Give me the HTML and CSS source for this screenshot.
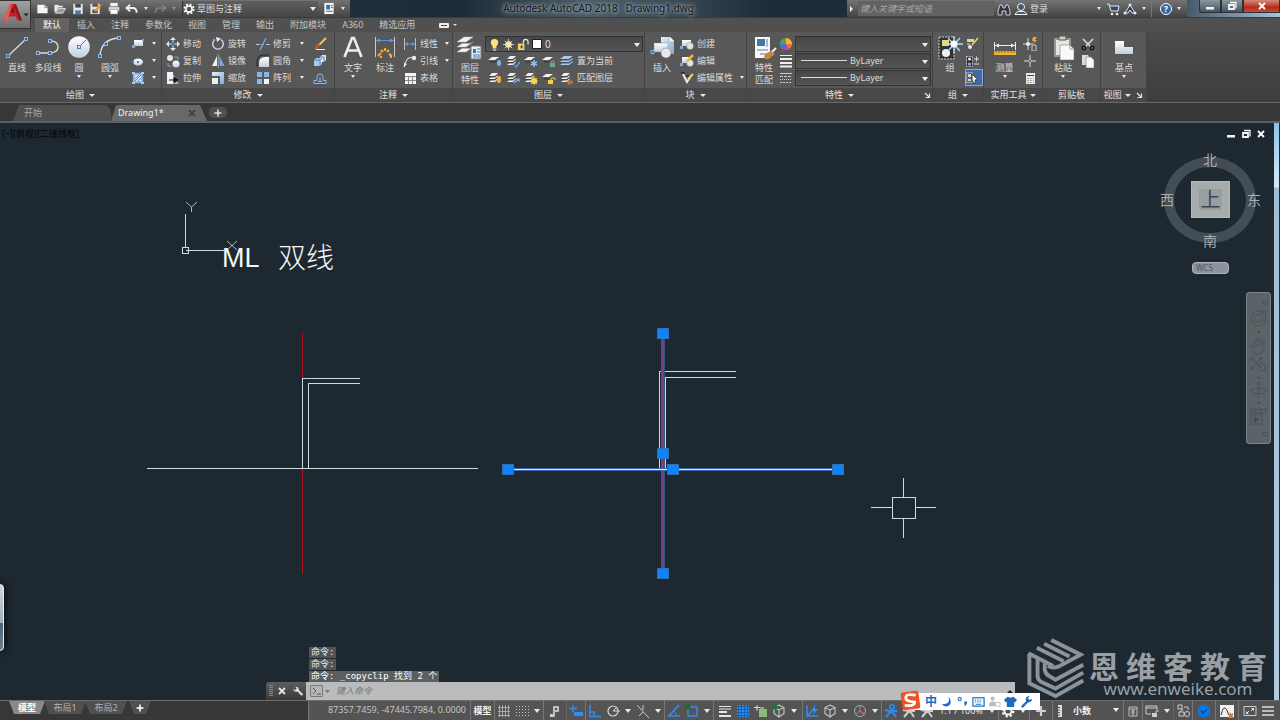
FILE: index.html
```html
<!DOCTYPE html>
<html lang="zh-CN">
<head>
<meta charset="utf-8">
<title>Autodesk AutoCAD 2018 - Drawing1.dwg</title>
<link rel="stylesheet" href="styles.css">
</head>
<body>
<svg class="sprite" aria-hidden="true">
<defs>
<linearGradient id="gw" x1="0" y1="0" x2="0" y2="1"><stop offset="0" stop-color="#ffffff"/><stop offset="1" stop-color="#c3cede"/></linearGradient>
<linearGradient id="gb" x1="0" y1="0" x2="1" y2="1"><stop offset="0" stop-color="#e4effb"/><stop offset="1" stop-color="#7fa9d8"/></linearGradient>
<pattern id="dots" width="3" height="3" patternUnits="userSpaceOnUse"><rect width="2" height="2" fill="#2f8cf0"/></pattern>
</defs>
<!-- large icons -->
<symbol id="line" viewBox="0 0 26 26"><path d="M4 21L22 4" stroke="#dcdcdc" stroke-width="1.3"/><g fill="#345f9c" stroke="#8db8ee"><rect x="2.500" y="19.500" width="3" height="3"/><rect x="20.500" y="2.500" width="3" height="3"/></g></symbol>
<symbol id="pline" viewBox="0 0 26 26"><path d="M4 18H16Q23 17 23 12Q23 6 15 6" fill="none" stroke="#dcdcdc" stroke-width="1.3"/><g fill="#345f9c" stroke="#8db8ee"><rect x="1.500" y="16.500" width="3" height="3"/><rect x="13.500" y="16.500" width="3" height="3"/><rect x="13.500" y="4.500" width="3" height="3"/></g></symbol>
<symbol id="circle" viewBox="0 0 26 26"><circle cx="13" cy="12" r="10.800" fill="url(#gw)"/><path d="M13 12L20 5" stroke="#4b7dbd"/><rect x="11.500" y="10.500" width="3" height="3" fill="#dce9f8" stroke="#4b7dbd"/></symbol>
<symbol id="arc" viewBox="0 0 26 26"><path d="M3 21Q4 4 22 3" fill="none" stroke="#dcdcdc" stroke-width="1.300"/><g fill="#345f9c" stroke="#8db8ee"><rect x="1.500" y="19.500" width="3" height="3"/><rect x="7.500" y="7.500" width="3" height="3"/><rect x="20.500" y="1.500" width="3" height="3"/></g></symbol>
<symbol id="textA" viewBox="0 0 26 26"><path d="M4.500 22L12 3H14L21.500 22M7.500 15.500H18.500" fill="none" stroke="#ededed" stroke-width="2.600"/></symbol>
<symbol id="dim" viewBox="0 0 26 26"><path d="M3.500 2V22M22.500 2V22" stroke="#ccc"/><path d="M4 5.500H22" stroke="#5b9ae6"/><path d="M4 5.500l4-2v4zM22 5.500l-4-2v4z" fill="#5b9ae6"/><path d="M6 21l3-3m0-3l2 2m2-4v3m4-1l-2 2m2 2l3 2M8 22h2m8 0h2" stroke="#f0ad2f" stroke-width="2.200"/></symbol>
<symbol id="layers" viewBox="0 0 26 26"><path d="M0 7L7 2H16L9 7zM0 12L5 8.500H14L16 7 9 12zM0 17L5 13.500H14L16 12 9 17z" fill="#f4f4f4" stroke="#bbb" stroke-width=".5"/><rect x="14" y="11" width="10" height="13" fill="#e8f0fa" stroke="#777"/><path d="M16 14h3v4h-3z" fill="#3875c0"/><path d="M20 14h3m-3 3h3m-7 3h7m-7 2h7" stroke="#4d77a8"/></symbol>
<symbol id="insert" viewBox="0 0 26 26"><path d="M12 2h9l4 4v13H12z" fill="url(#gb)"/><path d="M21 2v4h4" fill="#fff"/><rect x="5" y="8" width="14" height="9" fill="url(#gw)" stroke="#888" stroke-width=".5"/><circle cx="17" cy="18" r="5" fill="#e9e9e9" stroke="#777" stroke-width=".5"/><path d="M2 15.500h3v3H2z" fill="#345f9c" stroke="#8db8ee"/></symbol>
<symbol id="match" viewBox="0 0 26 26"><rect x="4" y="2" width="15" height="21" fill="#f4f7fb"/><path d="M6 4h8v7H6z" fill="#3e79ae"/><path d="M16 4v8M6 15h11M9 19h7" stroke="#778"/><path d="M14 19l6-3 4 3-6 5q-4 1-5-1z" fill="#c7843e"/><path d="M21 17l4-4" stroke="#eee" stroke-width="2"/></symbol>
<symbol id="group" viewBox="0 0 26 26"><rect x="2" y="2" width="15" height="22" fill="#333" stroke="#ccc" stroke-dasharray="2 1"/><rect x="5" y="5" width="7" height="6" fill="#e5d877"/><circle cx="9" cy="18" r="4" fill="#f0f0f0"/><path d="M17 1v17M8 9h18M11 3l12 13M23 3L11 16" stroke="#a9dcff" stroke-width="1.400"/><circle cx="17" cy="9" r="3.500" fill="#f3fbff"/></symbol>
<symbol id="measure" viewBox="0 0 26 26"><path d="M2.500 7v8M23.500 7v8M3 10.500h20" stroke="#eee"/><path d="M3 10.500l4-2v4zM23 10.500l-4-2v4z" fill="#eee"/><rect x="2" y="16" width="22" height="4" fill="#efb52b"/><path d="M4 16v2m3-2v2m3-2v2m3-2v2m3-2v2m3-2v2m3-2v2" stroke="#8f6512"/></symbol>
<symbol id="paste" viewBox="0 0 26 26"><path d="M4 3h17v19H4z" fill="#9b9789"/><path d="M6 5h13v15H6z" fill="#e6e6e2"/><path d="M9 1h7v4H9z" fill="#ccc" stroke="#555"/><path d="M10 10h10l4 4v11H10z" fill="#fafafa" stroke="#777" stroke-width=".600"/><path d="M20 10v4h4" fill="none" stroke="#999"/></symbol>
<symbol id="base" viewBox="0 0 26 26"><path d="M4 6h9v6h9v7H4z" fill="url(#gw)"/></symbol>
<!-- small icons -->
<symbol id="rect" viewBox="0 0 14 14"><rect x="3" y="3" width="9" height="6" fill="url(#gw)"/><path d="M1 8h3v3H1zM11 2h2v2h-2z" fill="#77a9e8"/></symbol>
<symbol id="ellipse" viewBox="0 0 14 14"><ellipse cx="7" cy="8" rx="5" ry="3.500" fill="url(#gw)"/><path d="M6 7h2v2H6zM1 7h2v2H1zM6 3h2v2H6z" fill="#4f83c8"/></symbol>
<symbol id="hatch" viewBox="0 0 14 14"><rect x="2" y="2" width="10" height="10" fill="#9dbde6" stroke="#5e91d4" stroke-dasharray="2 1"/><path d="M4 4h6v6H4z" fill="#d4e5fa"/><path d="M4 8l4-4M4 10l6-6M7 10l3-3" stroke="#5e91d4"/><path d="M1 1h3v2H1zM10 1h3v2h-3zM1 11h3v2H1zM10 11h3v2h-3z" fill="#a9ccf6"/></symbol>
<symbol id="move" viewBox="0 0 14 14"><path d="M7 0l3 3H4zM7 14l3-3H4zM0 7l3-3v6zM14 7l-3-3v6z" fill="#dfe9f5"/><path d="M7 3v8M3 7h8" stroke="#9bbbe0" stroke-width="1.400"/><circle cx="7" cy="7" r="1.500" fill="#4272b0"/></symbol>
<symbol id="rotate" viewBox="0 0 14 14"><path d="M4 2.500A5.300 5.300 0 1 0 10 2.500" fill="none" stroke="#d6e1ee" stroke-width="1.300"/><path d="M5 0l5 1.500L6 5z" fill="#e8eef6"/><circle cx="3" cy="3" r="1" fill="#6da5ec"/></symbol>
<symbol id="trim" viewBox="0 0 14 14"><path d="M0 7.500h4M10 7.500h4" stroke="#aac6ea"/><path d="M10 1L4 13" stroke="#6eaef5" stroke-width="1.300"/><path d="M5 7.500h4" stroke="#75aef0" stroke-dasharray="1 1"/></symbol>
<symbol id="brush" viewBox="0 0 14 14"><path d="M13 1L6 8" stroke="#edc36d" stroke-width="2"/><path d="M7 7l-3 5H1l3-5z" fill="#c55426"/><path d="M3 12.500h9" stroke="#eee"/></symbol>
<symbol id="copy" viewBox="0 0 14 14"><circle cx="4" cy="4" r="3" fill="#e6e6e6"/><circle cx="10" cy="10" r="3.500" fill="url(#gw)"/><path d="M8 3h4v3M2 9v3h3" fill="none" stroke="#73a5e2"/></symbol>
<symbol id="mirror" viewBox="0 0 14 14"><path d="M6 2v10H1z" fill="#f1f1f1"/><path d="M8.500 2v10h5z" fill="#7da8db"/><path d="M7.200 0v14" stroke="#ddd" stroke-width=".600"/></symbol>
<symbol id="fillet" viewBox="0 0 14 14"><path d="M1 13V8Q1 1 8 1h5" fill="none" stroke="#222"/><path d="M3 13V9q0-6 6-6h4v10z" fill="url(#gw)"/></symbol>
<symbol id="explode" viewBox="0 0 14 14"><path d="M1 6l2-2h6v6l-2 2H1z" fill="#a7cbf4"/><path d="M7 3l2-2h4v5l-2 2H7z" fill="#d6e8fb"/><path d="M1 6h6v6M7 6l2-2M7 3h4v5" fill="none" stroke="#5584bd"/></symbol>
<symbol id="stretch" viewBox="0 0 14 14"><path d="M1 1h6v12H1z" fill="#f2f2f2"/><path d="M7 3l6 10H7z" fill="#83b1e8"/><path d="M3 9h5M8 6.500L12 9l-4 2.500z" fill="#111" stroke="#111"/></symbol>
<symbol id="scale" viewBox="0 0 14 14"><path d="M1 1h12v12H9V5H1z" fill="url(#gb)"/><rect x="1" y="7" width="6" height="6" fill="#eee"/></symbol>
<symbol id="array" viewBox="0 0 14 14"><path d="M1 1h5v5H1zM8 1h5v5H8zM1 8h5v5H1z" fill="#87b5ed"/><path d="M8 8h5v5H8z" fill="#f4f4f4"/></symbol>
<symbol id="offset" viewBox="0 0 14 14"><path d="M1 12.500h12v-3H10V6a3 3 0 0 0-6 0v3.500H1z" fill="#4b5a6e" stroke="#9ab4d0"/><path d="M5 10.500h4M7 6v4" stroke="#9ab4d0"/></symbol>
<symbol id="dlin" viewBox="0 0 14 14"><path d="M1.500 1v12M12.500 1v12" stroke="#bbb"/><path d="M2 7h10" stroke="#5b9ae6"/><path d="M2 7l3-2v4zM12 7L9 5v4z" fill="#5b9ae6"/></symbol>
<symbol id="leader" viewBox="0 0 14 14"><path d="M1 13Q3 5 6 4t4 0" fill="none" stroke="#ddd" stroke-width="1.200"/><path d="M1 13l0-4 3 1z" fill="#eee"/><circle cx="11" cy="4" r="2.200" fill="#eee"/></symbol>
<symbol id="table" viewBox="0 0 14 14"><path d="M2 2h11v11H2z" fill="#f4f4f4"/><path d="M2 5.500h11M2 9.500h11M5.500 5v8M9.500 5v8" stroke="#888"/></symbol>
<symbol id="lay" viewBox="0 0 14 14"><path d="M0 6l4-3h7L7 6z" fill="#f2f2f2"/><path d="M2 8h5l3-2" fill="none" stroke="#333"/></symbol>
<symbol id="lay3" viewBox="0 0 14 14"><path d="M1 5l3-3h6L7 5zM1 8l2-1.500h4L10 4v1L7 8zM1 11l2-1.500h4L10 7v1l-3 3z" fill="#f0f0f0"/><path d="M1 5.500h6l3-2M1 8.500h6l3-2" fill="none" stroke="#333" stroke-width=".600"/></symbol>
<symbol id="l1" viewBox="0 0 14 14"><use href="#lay"/><rect x="9" y="6" width="4" height="6" rx="2" fill="#7ab1ec"/></symbol>
<symbol id="l2" viewBox="0 0 14 14"><use href="#lay3"/><path d="M8 11l2 2 4-5" fill="none" stroke="#5b9ae6" stroke-width="1.500"/></symbol>
<symbol id="l3" viewBox="0 0 14 14"><use href="#lay"/><path d="M10 6v7M7 8l6 3M13 8l-6 3" stroke="#8fc2fa" stroke-width="1.500"/></symbol>
<symbol id="l4" viewBox="0 0 14 14"><use href="#lay"/><path d="M8 9h5v4H8z" fill="#68aa8c"/><path d="M9 9V7h3v2" fill="none" stroke="#68aa8c"/></symbol>
<symbol id="l5" viewBox="0 0 14 14"><path d="M0 5l4-3h9L9 5zM0 8l2-1.500h7L13 4v1L9 8zM0 11l2-1.500h7L13 7v1l-4 3z" fill="#a8c9ee"/><path d="M0 5.500h9l4-3M0 8.500h9l4-3" fill="none" stroke="#35506f" stroke-width=".600"/></symbol>
<symbol id="l6" viewBox="0 0 14 14"><use href="#lay3"/><rect x="9" y="5" width="4" height="7" rx="2" fill="#f2ad38"/></symbol>
<symbol id="l7" viewBox="0 0 14 14"><use href="#lay3"/><path d="M8 12l5-4M10 8h3v3" fill="none" stroke="#7cb2f1" stroke-width="1.200"/></symbol>
<symbol id="l8" viewBox="0 0 14 14"><use href="#lay3"/><circle cx="10" cy="10" r="3" fill="#ffe25c"/><path d="M10 5v9M5 10h9M7 7l6 6M13 7l-6 6" stroke="#f5d145"/></symbol>
<symbol id="l9" viewBox="0 0 14 14"><use href="#lay"/><path d="M6 9h5v4H6z" fill="#f0d047"/><path d="M9 9V7h4v2" fill="none" stroke="#f0d047"/></symbol>
<symbol id="l10" viewBox="0 0 14 14"><use href="#lay3"/><path d="M7 10l5-1 1 3-5 2z" fill="#bd7637"/></symbol>
<symbol id="bulb" viewBox="0 0 14 14"><path d="M7 1a4 4 0 0 1 4 4q0 2-2 4v2H5V9Q3 7 3 5a4 4 0 0 1 4-4z" fill="#ffe17b"/><path d="M5 12h4M6 13.500h2" stroke="#ddd"/></symbol>
<symbol id="sun" viewBox="0 0 14 14"><path d="M7 1v12M1 7h12M3 3l8 8M11 3L3 11" stroke="#d9ceb0"/><circle cx="7" cy="7" r="3.500" fill="#f3e7b5"/></symbol>
<symbol id="unlock" viewBox="0 0 14 14"><path d="M2 6h7v7H2z" fill="#eed472"/><path d="M8 6V4a2.300 2.300 0 0 1 5 0v3" fill="none" stroke="#eee" stroke-width="1.300"/><path d="M5 8h2v3H5z" fill="#5a4615"/></symbol>
<symbol id="bcreate" viewBox="0 0 14 14"><path d="M2 3h9v6H2z" fill="url(#gw)"/><circle cx="10" cy="9" r="3.500" fill="#e3e3e3" stroke="#777" stroke-width=".500"/><path d="M0 9h3v3H0z" fill="#7baae4"/></symbol>
<symbol id="bedit" viewBox="0 0 14 14"><use href="#bcreate"/><path d="M7 7l6-6" stroke="#f2b341" stroke-width="2.500"/></symbol>
<symbol id="battr" viewBox="0 0 14 14"><path d="M3 3l4 8 4-6" fill="none" stroke="#ececec" stroke-width="2"/><path d="M8 8l5-5" stroke="#f1d073" stroke-width="2"/><path d="M1 2h4M6 5h3" stroke="#111"/></symbol>
<symbol id="wheel" viewBox="0 0 14 14"><circle cx="7" cy="7" r="6" fill="#e65050"/><path d="M7 7L1 7A6 6 0 0 1 7 1z" fill="#40ad4c"/><path d="M7 7V1a6 6 0 0 1 6 6z" fill="#f4b633"/><path d="M7 7h6a6 6 0 0 1-3 5z" fill="#ef7141"/><path d="M7 7L2 10A6 6 0 0 0 9 12z" fill="#8f4fc8"/><path d="M7 7H1q0 2 1 4z" fill="#347ee0"/></symbol>
<symbol id="lwt" viewBox="0 0 14 14"><path d="M1 1.500h12" stroke="#eee"/><path d="M1 5h12" stroke="#eee" stroke-width="2"/><path d="M1 9h12M1 12.500h12" stroke="#eee" stroke-width="2"/></symbol>
<symbol id="ltp" viewBox="0 0 14 14"><path d="M1 2.500h12" stroke="#ccc"/><path d="M1 5.500h12" stroke="#ccc" stroke-dasharray="3 1"/><path d="M1 8.500h12" stroke="#ccc" stroke-dasharray="1 1"/><path d="M1 11.500h12" stroke="#ccc" stroke-dasharray="2 1"/></symbol>
<symbol id="g1" viewBox="0 0 14 14"><path d="M2 2h7v3H2z" fill="#e4d978"/><path d="M2 7h3" stroke="#ddd"/><circle cx="5" cy="10" r="2" fill="#eee"/><path d="M7 8l6-7" stroke="#e4d978" stroke-width="1.500"/></symbol>
<symbol id="g2" viewBox="0 0 14 14"><path d="M1.500 2.500h6v10h-6z" fill="#253144" stroke="#bbb" stroke-dasharray="2 1"/><circle cx="4.500" cy="5" r="1.500" fill="#eee"/><circle cx="4.500" cy="10" r="1.500" fill="#8db8ee"/><path d="M9 5h5M11.500 2.500v5M9 10h5" stroke="#ddd"/></symbol>
<symbol id="g3" viewBox="0 0 14 14"><path d="M1.500 1.500h6v10h-6z" fill="none" stroke="#ccd" stroke-dasharray="1 1"/><path d="M3 3h3v3H3zM3 8h3v2H3z" fill="#dedb9a"/><path d="M7 3l6 6-3 0 1 3-2 0-2-3z" fill="#f5f5c7" stroke="#345"/></symbol>
<symbol id="pt" viewBox="0 0 14 14"><path d="M7 1v12M1 7h12" stroke="#d9d9d9"/><path d="M5 7l2-2 2 2-2 2z" fill="#d0d0d0"/><path d="M7 6v2M6 7h2" stroke="#444"/></symbol>
<symbol id="qpt" viewBox="0 0 14 14"><path d="M5 1v12M0 7h10" stroke="#d9d9d9"/><circle cx="5" cy="7" r="2" fill="#eee"/><path d="M10 0l4 0-2 3h2l-4 4 1-3H9z" fill="#f0a43b"/><path d="M9 8h4v6H9z" fill="none" stroke="#ccc"/></symbol>
<symbol id="calc" viewBox="0 0 14 14"><path d="M3 2h9v11H3z" fill="#e9e9e9"/><path d="M4 4.500h7" stroke="#444"/><path d="M4 7.500h7M4 9.500h7M4 11.500h7" stroke="#aaa" stroke-dasharray="2 1"/></symbol>
<symbol id="cut" viewBox="0 0 14 14"><path d="M2 2l8 8M12 2L4 10" stroke="#e4e4e4" stroke-width="1.400"/><circle cx="3" cy="11" r="1.800" fill="none" stroke="#151515" stroke-width="1.300"/><circle cx="11" cy="11" r="1.800" fill="none" stroke="#151515" stroke-width="1.300"/></symbol>
<symbol id="copy2" viewBox="0 0 14 14"><path d="M1 1h6l1 2v8H1z" fill="#ddd"/><path d="M5 3h5l3 3v8H5z" fill="#f8f8f8" stroke="#777" stroke-width=".600"/></symbol>
<!-- quick access and title bar -->
<symbol id="new" viewBox="0 0 14 14"><path d="M2 3h8l3 3v6H2z" fill="#f5f5f5"/><path d="M10 3v3h3" fill="none" stroke="#888"/></symbol>
<symbol id="open" viewBox="0 0 14 14"><path d="M1 3h4l1 1h4v2H5l-2 4-2 1z" fill="#e8e8e8"/><path d="M5 7h8l-3 5H2z" fill="#9b9b9b" stroke="#f4f4f4" stroke-width=".800"/></symbol>
<symbol id="save" viewBox="0 0 14 14"><path d="M2 2h10v11H2z" fill="#e8e8e8"/><path d="M4 2h6v4H4z" fill="#42464d"/><path d="M4 9h6v4H4z" fill="#4e78ad"/></symbol>
<symbol id="saveas" viewBox="0 0 14 14"><path d="M1 2h10v11H1z" fill="#e8e8e8"/><path d="M3 2h6v3H3zM3 8h6v4H3z" fill="#555"/><path d="M6 10l6-7" stroke="#e79635" stroke-width="2.500"/></symbol>
<symbol id="print" viewBox="0 0 14 14"><path d="M3 1h8v4H3z" fill="#f5f5f5"/><path d="M1 5h12v5H1z" fill="#ddd" stroke="#555" stroke-width=".600"/><path d="M3 8h8v5H3z" fill="#fff" stroke="#777" stroke-width=".600"/></symbol>
<symbol id="undo" viewBox="0 0 14 14"><path d="M5 3L1 6.500 5 10M1 6.500h7q4 0 4 5" fill="none" stroke="#f0f0f0" stroke-width="2"/></symbol>
<symbol id="redo" viewBox="0 0 14 14"><path d="M9 3l4 3.500L9 10M13 6.500H6q-4 0-4 5" fill="none" stroke="#858585" stroke-width="1.600"/></symbol>
<symbol id="gear" viewBox="0 0 14 14"><circle cx="7" cy="7" r="5.300" fill="none" stroke="#f4f4f4" stroke-width="2.400" stroke-dasharray="2.200 1.960"/><circle cx="7" cy="7" r="3.600" fill="none" stroke="#f4f4f4" stroke-width="2"/></symbol>
<symbol id="palette" viewBox="0 0 14 14"><path d="M2 1h10v12H2z" fill="#f5f5f5"/><path d="M4 3h4v5H4z" fill="#2f6fb3"/><path d="M9 4h2M9 6h2M4 10h7" stroke="#555"/></symbol>
<symbol id="find" viewBox="0 0 14 14"><path d="M1 9l2-6h2l1 3h2l1-3h2l2 6v4H9V9H5v4H1z" fill="#2e3544" stroke="#eee" stroke-width=".800"/></symbol>
<symbol id="user" viewBox="0 0 14 14"><circle cx="7" cy="5" r="3.500" fill="#46566f" stroke="#f5f5f5"/><path d="M1 12.500q1-3 4-3h4q3 0 4 3z" fill="#46566f" stroke="#f5f5f5"/></symbol>
<symbol id="cart" viewBox="0 0 14 14"><path d="M1 2h2l2 7h7l1-5H4" fill="#33476b" stroke="#e9edf5"/><circle cx="6" cy="12" r="1.300" fill="#eee"/><circle cx="11" cy="12" r="1.300" fill="#eee"/></symbol>
<symbol id="share" viewBox="0 0 14 14"><path d="M7 3l5 8H9L7 8l-2 3H2z" fill="#2e3d57" stroke="#dfe6f2"/><circle cx="7" cy="3" r="1.500" fill="#dfe6f2"/><circle cx="2" cy="11" r="1.500" fill="#dfe6f2"/><circle cx="12" cy="11" r="1.500" fill="#dfe6f2"/></symbol>
<symbol id="min" viewBox="0 0 10 10"><path d="M1 6h8v2.500H1z" fill="#f4f4f4"/></symbol>
<symbol id="restore" viewBox="0 0 10 10"><path d="M3 1.500h6v6" fill="none" stroke="#f4f4f4" stroke-width="1.300"/><path d="M2 4h5v4H2z" fill="none" stroke="#f4f4f4" stroke-width="1.800"/></symbol>
<symbol id="x" viewBox="0 0 10 10"><path d="M2 2l6 6M8 2L2 8" stroke="currentColor" stroke-width="1.800"/></symbol>
<symbol id="plus" viewBox="0 0 10 10"><path d="M5 1.500v7M1.500 5h7" stroke="currentColor" stroke-width="1.600"/></symbol>
<symbol id="corner" viewBox="0 0 10 10"><path d="M3 3l4 4M7.500 3.500v4h-4" fill="none" stroke="#e5e5e5" stroke-width="1.200"/></symbol>
<symbol id="wrench" viewBox="0 0 14 14"><path d="M1.500 4.500a3.500 3.500 0 0 0 5 3l4.500 5 2-1.800-5-4.500a3.500 3.500 0 0 0-4-4l1.500 2.300-1.700 1.700z" fill="currentColor"/></symbol>
<!-- status bar -->
<symbol id="s-grid" viewBox="0 0 14 14"><path d="M2.500 1v12M5.500 1v12M8.500 1v12M11.500 1v12M1 3.500h12M1 7.500h12M1 11.500h12" stroke="#b9b9b9" stroke-width=".800"/></symbol>
<symbol id="s-snap" viewBox="0 0 14 14"><path d="M1 2.500h13M1 5.500h13M1 8.500h13M1 11.500h13" stroke="#c6c6c6" stroke-dasharray="1 2"/></symbol>
<symbol id="s-infer" viewBox="0 0 14 14"><path d="M6 13V3h4v4H7" fill="none" stroke="#e0e0e0" stroke-width="1.500"/><path d="M2 10h3v3H2z" fill="#ccc"/></symbol>
<symbol id="s-dyn" viewBox="0 0 14 14"><path d="M4 1v7M0 4.500h8" stroke="#2f8cf0" stroke-width="1.500"/><path d="M5 8h9v4H5z" fill="#2f8cf0"/></symbol>
<symbol id="s-ortho" viewBox="0 0 14 14"><path d="M2 1v11.500h11M2 8h4v4" fill="none" stroke="#2f8cf0" stroke-width="1.600"/></symbol>
<symbol id="s-polar" viewBox="0 0 14 14"><circle cx="7" cy="7" r="5" fill="none" stroke="#d5d5d5" stroke-width="1.200"/><path d="M7 7h7M7 7l4-4" stroke="#d5d5d5"/></symbol>
<symbol id="s-iso" viewBox="0 0 14 14"><path d="M1 1l12 13M7 1v5M7 8L3 12" stroke="#c9c9c9"/></symbol>
<symbol id="s-angle" viewBox="0 0 14 14"><path d="M12 1L2 12h11" fill="none" stroke="#2f8cf0" stroke-width="1.700"/><path d="M7 7q2 1 2 5" fill="none" stroke="#2f8cf0"/></symbol>
<symbol id="s-osnap" viewBox="0 0 14 14"><path d="M3 3h9v9H3z" fill="none" stroke="#2f8cf0" stroke-width="1.500"/><circle cx="3" cy="3" r="2.500" fill="#156f35"/></symbol>
<symbol id="s-lw" viewBox="0 0 14 14"><path d="M1 2.500h12M1 5h12" stroke="#e5e5e5"/><path d="M1 8h8" stroke="#e5e5e5" stroke-width="2"/><path d="M1 12h12" stroke="#e5e5e5" stroke-width="2"/></symbol>
<symbol id="s-trans" viewBox="0 0 14 14"><path d="M1 1h12v12H1z" fill="#195ca9"/><path d="M1 1h12v12H1z" fill="url(#dots)"/></symbol>
<symbol id="s-cycle" viewBox="0 0 14 14"><path d="M5 5h8v8H5z" fill="#8bbd75"/><path d="M0 3.500h6M3 1v6M6 4l4 0" stroke="#ddd"/></symbol>
<symbol id="s-cube" viewBox="0 0 14 14"><path d="M7 1l5 2.500v6L7 13 2 9.500v-6zM2 3.500L7 6l5-2.500M7 6v7" fill="none" stroke="#c7c7c7" stroke-width="1.100"/></symbol>
<symbol id="s-3dsnap" viewBox="0 0 14 14"><use href="#s-cube"/><circle cx="3" cy="3" r="2.500" fill="#0e7b38"/></symbol>
<symbol id="s-ucs" viewBox="0 0 14 14"><path d="M2 1v11h11M2 12l5-5" fill="none" stroke="#2f8cf0" stroke-width="1.500"/><path d="M10 1L6 7h3l-1 4 5-6h-3z" fill="#2f8cf0"/></symbol>
<symbol id="s-gizmo" viewBox="0 0 14 14"><circle cx="7" cy="7" r="5.500" fill="none" stroke="#a9a9a9"/><path d="M7 1v6" stroke="#5d9ae2"/><path d="M7 7l-5 4" stroke="#55b561"/><path d="M7 7l5 4" stroke="#db5a52" stroke-width="2"/></symbol>
<symbol id="s-man" viewBox="0 0 14 14"><circle cx="8" cy="3" r="2.200" fill="none" stroke="currentColor" stroke-width="1.600"/><path d="M1 6l5 1h7M7 7l-5 6M8 7l4 6" fill="none" stroke="currentColor" stroke-width="2"/></symbol>
<symbol id="s-units" viewBox="0 0 14 14"><path d="M5 1h4v12H5z" fill="#ddd"/><path d="M5 3.500h2M5 6h2M5 8.500h2M5 11h2" stroke="#555"/></symbol>
<symbol id="s-qp" viewBox="0 0 14 14"><path d="M3 3h8v9H3zM3 5h8M5 7h4M5 9h4M7 5v7" fill="none" stroke="#bbb"/></symbol>
<symbol id="s-lockui" viewBox="0 0 14 14"><path d="M6 10H1V2h11v4M1 4h11" fill="none" stroke="#ccc"/><path d="M7 9h5v4H7z" fill="#ccc"/><path d="M11 9V7h3" fill="none" stroke="#ccc"/></symbol>
<symbol id="s-iso2" viewBox="0 0 14 14"><path d="M2 1h4v4H2zM8 3h4v3M4 8l3-3M3 8h5v4H3z" fill="none" stroke="#ccc"/><circle cx="11" cy="10" r="2.500" fill="none" stroke="#ccc"/></symbol>
<symbol id="s-hw" viewBox="0 0 14 14"><circle cx="7" cy="7" r="6.500" fill="#0878de"/><path d="M4 7l2 2 4-4" fill="none" stroke="#0b4787" stroke-width="1.500"/></symbol>
<symbol id="s-perf" viewBox="0 0 14 14"><path d="M0 1h14v12H0z" fill="#f2f2f2"/><path d="M1 11q2-8 4-7t3 5 5 1" fill="none" stroke="#333"/><path d="M10 8l4 6H8z" fill="#ef7624"/></symbol>
<symbol id="s-clean" viewBox="0 0 14 14"><path d="M1 2.500h12v9H1z" fill="none" stroke="#ccc"/><path d="M3 10V7l3 3zM11 4v3L8 4z" fill="#ddd"/><path d="M4 9l2-2M10 5L8 7" stroke="#ddd"/></symbol>
<symbol id="s-menu" viewBox="0 0 14 14"><path d="M1 3h12M1 7h12M1 11h12" stroke="#ddd" stroke-width="1.500"/></symbol>
</svg>

<header class="titlebar">
  <nav class="qat" aria-label="快速访问">
    <button aria-label="新建"><svg class="i"><use href="#new"/></svg></button>
    <button aria-label="打开"><svg class="i"><use href="#open"/></svg></button>
    <button aria-label="保存"><svg class="i"><use href="#save"/></svg></button>
    <button aria-label="另存为"><svg class="i"><use href="#saveas"/></svg></button>
    <button aria-label="打印"><svg class="i"><use href="#print"/></svg></button>
    <button aria-label="放弃"><svg class="i"><use href="#undo"/></svg></button><button class="dd" aria-label="放弃列表"></button>
    <button class="tight" aria-label="重做"><svg class="i"><use href="#redo"/></svg></button><button class="dd dim" aria-label="重做列表"></button>
    <label class="workspace"><svg class="i"><use href="#gear"/></svg><select aria-label="工作空间"><option>草图与注释</option></select></label>
    <button aria-label="特性面板"><svg class="i"><use href="#palette"/></svg></button><button class="dd" aria-label="自定义"></button>
  </nav>
  <h1><span>Autodesk AutoCAD 2018</span><span>Drawing1.dwg</span></h1>
  <div class="info">
    <button class="fold" aria-label="折叠"></button>
    <input type="search" aria-label="搜索" placeholder="键入关键字或短语">
    <button aria-label="搜索"><svg class="i"><use href="#find"/></svg></button>
    <button class="login"><svg class="i"><use href="#user"/></svg>登录</button><button class="dd" aria-label="登录列表"></button>
    <button aria-label="应用商店"><svg class="i"><use href="#cart"/></svg></button>
    <button aria-label="保持连接"><svg class="i"><use href="#share"/></svg></button><button class="dd sep" aria-label="连接列表"></button>
    <button class="help" aria-label="帮助"><b>?</b></button><button class="dd" aria-label="帮助列表"></button>
  </div>
  <div class="winbtns">
    <button aria-label="最小化"><svg class="s"><use href="#min"/></svg></button>
    <button aria-label="还原"><svg class="s"><use href="#restore"/></svg></button>
    <button class="close" aria-label="关闭"><svg class="s"><use href="#x"/></svg></button>
  </div>
  <button class="appbtn" aria-label="应用程序菜单"><svg viewBox="0 0 30 29"><path d="M3 20L10 3h6l6 17h-5l-1-4H9l-2 4z" fill="#c4202b"/><path d="M10 12h5l-2-6z" fill="#7b1219"/><path d="M3 20L10 3l2 1-5 17z" fill="#ec5a58"/><path d="M16 3l6 17-2 1L14 5z" fill="#8c1620"/><path d="M24 13h5l-2.500 3z" fill="#222"/></svg></button>
</header>

<nav class="tabs" aria-label="功能区选项卡">
  <button class="on">默认</button><button>插入</button><button>注释</button><button>参数化</button><button>视图</button><button>管理</button><button>输出</button><button>附加模块</button><button>A360</button><button>精选应用</button>
  <button class="mini" aria-label="最小化功能区"><i></i></button>
</nav>

<main class="ribbon">
  <section class="panel p-draw">
    <div class="body">
      <button class="big"><svg><use href="#line"/></svg>直线</button>
      <button class="big wide"><svg><use href="#pline"/></svg>多段线</button>
      <button class="big more"><svg><use href="#circle"/></svg>圆</button>
      <button class="big wide more"><svg><use href="#arc"/></svg>圆弧</button>
      <div class="col"><button class="sm more" aria-label="矩形"><svg class="i"><use href="#rect"/></svg></button><button class="sm more" aria-label="椭圆"><svg class="i"><use href="#ellipse"/></svg></button><button class="sm more" aria-label="图案填充"><svg class="i"><use href="#hatch"/></svg></button></div>
    </div>
    <h2 class="arr">绘图</h2>
  </section>
  <section class="panel p-modify">
    <div class="body">
      <div class="col"><button class="sm"><svg class="i"><use href="#move"/></svg>移动</button><button class="sm"><svg class="i"><use href="#copy"/></svg>复制</button><button class="sm"><svg class="i"><use href="#stretch"/></svg>拉伸</button></div>
      <div class="col"><button class="sm"><svg class="i"><use href="#rotate"/></svg>旋转</button><button class="sm"><svg class="i"><use href="#mirror"/></svg>镜像</button><button class="sm"><svg class="i"><use href="#scale"/></svg>缩放</button></div>
      <div class="col"><button class="sm more"><svg class="i"><use href="#trim"/></svg>修剪</button><button class="sm more"><svg class="i"><use href="#fillet"/></svg>圆角</button><button class="sm more"><svg class="i"><use href="#array"/></svg>阵列</button></div>
      <div class="col"><button class="sm" aria-label="删除"><svg class="i"><use href="#brush"/></svg></button><button class="sm" aria-label="分解"><svg class="i"><use href="#explode"/></svg></button><button class="sm" aria-label="偏移"><svg class="i"><use href="#offset"/></svg></button></div>
    </div>
    <h2 class="arr">修改</h2>
  </section>
  <section class="panel p-annot">
    <div class="body">
      <button class="big wide more"><svg><use href="#textA"/></svg>文字</button>
      <button class="big wide"><svg><use href="#dim"/></svg>标注</button>
      <div class="col"><button class="sm more"><svg class="i"><use href="#dlin"/></svg>线性</button><button class="sm more"><svg class="i"><use href="#leader"/></svg>引线</button><button class="sm"><svg class="i"><use href="#table"/></svg>表格</button></div>
    </div>
    <h2 class="arr">注释</h2>
  </section>
  <section class="panel p-layer">
    <div class="body">
      <button class="big"><svg><use href="#layers"/></svg>图层<br>特性</button>
      <div class="col grow">
        <label class="combo"><svg class="i"><use href="#bulb"/></svg><svg class="i"><use href="#sun"/></svg><svg class="i"><use href="#unlock"/></svg><i class="swatch"></i><select aria-label="图层"><option>0</option></select></label>
        <div class="row"><button class="sm" aria-label="关闭图层"><svg class="i"><use href="#l1"/></svg></button><button class="sm" aria-label="隔离"><svg class="i"><use href="#l2"/></svg></button><button class="sm" aria-label="冻结"><svg class="i"><use href="#l3"/></svg></button><button class="sm" aria-label="锁定"><svg class="i"><use href="#l4"/></svg></button><button class="sm"><svg class="i"><use href="#l5"/></svg>置为当前</button></div>
        <div class="row"><button class="sm" aria-label="打开图层"><svg class="i"><use href="#l6"/></svg></button><button class="sm" aria-label="取消隔离"><svg class="i"><use href="#l7"/></svg></button><button class="sm" aria-label="解冻"><svg class="i"><use href="#l8"/></svg></button><button class="sm" aria-label="解锁"><svg class="i"><use href="#l9"/></svg></button><button class="sm"><svg class="i"><use href="#l10"/></svg>匹配图层</button></div>
      </div>
    </div>
    <h2 class="arr">图层</h2>
  </section>
  <section class="panel p-block">
    <div class="body">
      <button class="big"><svg><use href="#insert"/></svg>插入</button>
      <div class="col"><button class="sm"><svg class="i"><use href="#bcreate"/></svg>创建</button><button class="sm"><svg class="i"><use href="#bedit"/></svg>编辑</button><button class="sm more"><svg class="i"><use href="#battr"/></svg>编辑属性</button></div>
    </div>
    <h2 class="arr">块</h2>
  </section>
  <section class="panel p-prop">
    <div class="body">
      <button class="big"><svg><use href="#match"/></svg>特性<br>匹配</button>
      <div class="col grow">
        <div class="row"><svg class="i"><use href="#wheel"/></svg><label class="combo"><select aria-label="对象颜色"><option></option></select></label></div>
        <div class="row"><svg class="i"><use href="#lwt"/></svg><label class="combo"><i class="rule"></i><select aria-label="线宽"><option>ByLayer</option></select></label></div>
        <div class="row"><svg class="i"><use href="#ltp"/></svg><label class="combo"><i class="rule"></i><select aria-label="线型"><option>ByLayer</option></select></label></div>
      </div>
    </div>
    <h2 class="arr">特性<svg class="s launch"><use href="#corner"/></svg></h2>
  </section>
  <section class="panel p-group">
    <div class="body">
      <button class="big"><svg><use href="#group"/></svg>组</button>
      <div class="col"><button class="sm" aria-label="解除编组"><svg class="i"><use href="#g1"/></svg></button><button class="sm" aria-label="组编辑"><svg class="i"><use href="#g2"/></svg></button><button class="sm on" aria-label="启用组选择"><svg class="i"><use href="#g3"/></svg></button></div>
    </div>
    <h2 class="arr">组</h2>
  </section>
  <section class="panel p-util">
    <div class="body">
      <button class="big more"><svg><use href="#measure"/></svg>测量</button>
      <div class="col"><button class="sm" aria-label="快速选择"><svg class="i"><use href="#qpt"/></svg></button><button class="sm" aria-label="点坐标"><svg class="i"><use href="#pt"/></svg></button><button class="sm" aria-label="计算器"><svg class="i"><use href="#calc"/></svg></button></div>
    </div>
    <h2 class="arr">实用工具</h2>
  </section>
  <section class="panel p-clip">
    <div class="body">
      <button class="big more"><svg><use href="#paste"/></svg>粘贴</button>
      <div class="col"><button class="sm" aria-label="剪切"><svg class="i"><use href="#cut"/></svg></button><button class="sm" aria-label="复制剪裁"><svg class="i"><use href="#copy2"/></svg></button></div>
    </div>
    <h2>剪贴板</h2>
  </section>
  <section class="panel p-view">
    <div class="body"><button class="big more"><svg><use href="#base"/></svg>基点</button></div>
    <h2 class="arr">视图<svg class="s"><use href="#corner"/></svg></h2>
  </section>
</main>

<nav class="docs" aria-label="文件选项卡">
  <button class="doc">开始</button>
  <button class="doc on"><span>Drawing1*</span><svg class="s"><use href="#x"/></svg></button>
  <button class="add" aria-label="新图形"><svg class="s"><use href="#plus"/></svg></button>
</nav>

<section class="canvas">
  <svg class="drawing" aria-label="图形">
    <g transform="translate(0 -123)" fill="none" stroke="#d3dadd" shape-rendering="crispEdges">
      <path d="M185.500 214V247M189 250.500H224M182.500 247.500h6v6h-6zM185.500 250.500h3"/>
      <path d="M186 202l5.500 5 5.500-5M191.500 207v5M227 241l10 9M237 241l-10 9" shape-rendering="auto" stroke-width=".800"/>
      <path d="M302.500 333V378M302.500 469V574" stroke="#a9161d"/>
      <path d="M147 468.500H478M302.500 468V378.500H360M308.500 468V383.500H360"/>
      <path d="M659.500 469V371.500H736M665.500 469V377.500H736"/>
      <path d="M662.500 334V573" stroke="#76407f" stroke-width="3"/><path d="M664.500 334V573" stroke="#31538d"/>
      <path d="M508 469.500H838" stroke="#3f66ae" stroke-width="3"/><path d="M508 469.500H838" stroke="#dbe5f5"/>
      <g fill="#0a84ff" stroke="#316fae"><path d="M657.500 328.500h11v10h-11zM657.500 448.500h11v10h-11zM657.500 568.500h11v10h-11zM502.500 464.500h11v10h-11zM667.500 464.500h11v10h-11zM832.500 464.500h11v10h-11z"/></g>
      <path d="M892.500 497.500h23v21h-23zM871 507.500h21M916 507.500h20M903.500 478v19M903.500 519v19"/>
    </g>
    <g class="cadtext"><text x="222" y="144">ML</text><text class="han" x="278" y="145">双线</text></g>
  </svg>
  <p class="vlabel">[−][俯视][二维线框]</p>
  <div class="vpbtns"><button aria-label="最小化视口"><svg class="s"><use href="#min"/></svg></button><button aria-label="还原视口"><svg class="s"><use href="#restore"/></svg></button><button aria-label="关闭视口"><svg class="s"><use href="#x"/></svg></button></div>
  <div class="cube">
    <svg viewBox="0 0 94 88" aria-hidden="true"><ellipse cx="47" cy="44" rx="41" ry="38" fill="none" stroke="#434d55" stroke-width="10"/></svg>
    <b class="n">北</b><b class="w">西</b><b class="e">东</b><b class="s2">南</b>
    <button class="top">上</button>
  </div>
  <button class="wcs">WCS</button>
  <div class="navbar">
    <svg viewBox="0 0 25 152" fill="none" stroke="#495662" stroke-width="1.200"><circle cx="20" cy="4" r="2.500"/><circle cx="12.500" cy="22" r="8"/><circle cx="12.500" cy="22" r="4"/><path d="M13 14h7v8"/><path d="M11 36h4l-2 2zM11 86h4l-2 2zM11 113h4l-2 2z" fill="#3c464f" stroke="none"/><path d="M7 58L4 52q2-1 4 2V47q2-1 2 0v5-7q2-2 3 0v7-7q2-1 3 1v6l1-4q2-1 2 1l-2 9-3 3H9z"/><path d="M4 65l12 11M16 65L4 77M4 68v-3h3M13 65h3v3M4 74v3h3"/><circle cx="16" cy="75" r="4"/><path d="M19 78l3 3M12.500 92v16M10 95l2.500-4 2.500 4"/><ellipse cx="12.500" cy="101" rx="8" ry="3"/><path d="M4 121h5v4H4zM10 121h5v4h-5zM16 121h5v4h-5zM4 127h12v10H4z"/><path d="M8 129l5 3-5 3z" fill="#3c464f"/><circle cx="20" cy="148" r="2.500"/></svg>
  </div>
  <div class="edge"></div>
  <div class="drawer"></div>
  <div class="brand">
    <svg viewBox="45 25 180 190" fill="none" stroke="#8d9398" stroke-width="12"><path d="M122 31L212 76 145 112Q128 120 112 111"/><path d="M100 43L178 82M78 55L160 96M52 72L128 111"/><path d="M55 74V164L135 203 220 155"/><path d="M80 90V142Q81 154 92 160L135 180 220 131"/><path d="M102 102V122Q104 135 116 142L135 153 220 107"/></svg>
    <div class="brandtext"><strong><span>恩</span><span>维</span><span>客</span><span>教</span><span>育</span></strong><em>www.enweike.com</em></div>
  </div>
  <div class="cmd">
    <ol><li>命令:</li><li>命令:</li><li>命令: _copyclip 找到 2 个</li></ol>
    <div class="cmdline">
      <i class="grip"></i>
      <button aria-label="关闭命令行"><svg class="s"><use href="#x"/></svg></button>
      <button aria-label="自定义"><svg class="i"><use href="#wrench"/></svg></button>
      <div class="field"><svg class="prompt" viewBox="0 0 20 12"><path d="M.500.500h12v11H.500z" fill="#b4b6b7" stroke="#77797b"/><path d="M3 3l3 3-3 3M7 9h4" fill="none" stroke="#55585a"/><path d="M15 5h5l-2.500 3z" fill="#777"/></svg><input aria-label="命令" placeholder="键入命令"><i class="up"></i></div>
    </div>
  </div>
</section>

<footer class="status">
  <nav class="layouts" aria-label="布局"><button class="on">模型</button><button>布局1</button><button>布局2</button><button class="addl" aria-label="新建布局"><svg class="s"><use href="#plus"/></svg></button></nav>
  <output class="coords">87357.7459, -47445.7984, 0.0000</output>
  <div class="g"><button class="model">模型</button></div>
  <div class="g"><button aria-label="栅格"><svg class="i"><use href="#s-grid"/></svg></button><button aria-label="捕捉"><svg class="i"><use href="#s-snap"/></svg></button><button class="dd" aria-label="捕捉列表"></button></div>
  <div class="g roomy"><button aria-label="推断约束"><svg class="i"><use href="#s-infer"/></svg></button></div>
  <div class="g flat"><button aria-label="动态输入"><svg class="i"><use href="#s-dyn"/></svg></button></div>
  <div class="g"><button aria-label="正交"><svg class="i"><use href="#s-ortho"/></svg></button><button aria-label="极轴"><svg class="i"><use href="#s-polar"/></svg></button><button class="dd" aria-label="极轴列表"></button><button aria-label="等轴测"><svg class="i"><use href="#s-iso"/></svg></button><button class="dd" aria-label="等轴测列表"></button></div>
  <div class="g"><button aria-label="对象捕捉追踪"><svg class="i"><use href="#s-angle"/></svg></button><button aria-label="对象捕捉"><svg class="i"><use href="#s-osnap"/></svg></button><button class="dd" aria-label="对象捕捉列表"></button></div>
  <div class="g roomy"><button aria-label="线宽"><svg class="i"><use href="#s-lw"/></svg></button><button aria-label="透明度"><svg class="i"><use href="#s-trans"/></svg></button><button aria-label="选择循环"><svg class="i"><use href="#s-cycle"/></svg></button><button aria-label="三维对象捕捉"><svg class="i"><use href="#s-3dsnap"/></svg></button><button class="dd" aria-label="三维捕捉列表"></button></div>
  <div class="g"><button aria-label="动态UCS"><svg class="i"><use href="#s-ucs"/></svg></button><button aria-label="选择过滤"><svg class="i"><use href="#s-cube"/></svg></button><button class="dd" aria-label="过滤列表"></button><button aria-label="小控件"><svg class="i"><use href="#s-gizmo"/></svg></button><button class="dd" aria-label="小控件列表"></button></div>
  <div class="g"><button class="blue" aria-label="注释可见性"><svg class="i"><use href="#s-man"/></svg></button><button aria-label="自动缩放"><svg class="i"><use href="#s-man"/></svg></button><button aria-label="注释比例"><svg class="i"><use href="#s-man"/></svg></button><button class="ratio">1:1 / 100%</button><button class="dd" aria-label="比例列表"></button></div>
  <div class="g"><button aria-label="工作空间设置"><svg class="i"><use href="#gear"/></svg></button><button class="dd" aria-label="工作空间列表"></button></div>
  <div class="g roomy"><button aria-label="注释监视器"><svg class="i"><use href="#plus"/></svg></button></div>
  <div class="g"><svg class="i"><use href="#s-units"/></svg><label class="units"><select aria-label="单位"><option>小数</option></select></label></div>
  <div class="g"><button aria-label="快捷特性"><svg class="i"><use href="#s-qp"/></svg></button></div>
  <div class="g"><button aria-label="锁定界面"><svg class="i"><use href="#s-lockui"/></svg></button><button class="dd" aria-label="锁定列表"></button></div>
  <div class="g flat"><button aria-label="隔离对象"><svg class="i"><use href="#s-iso2"/></svg></button></div>
  <div class="g roomy"><button aria-label="硬件加速"><svg class="i"><use href="#s-hw"/></svg></button></div>
  <div class="g roomy"><button aria-label="性能"><svg class="i"><use href="#s-perf"/></svg></button></div>
  <div class="g roomy"><button aria-label="全屏显示"><svg class="i"><use href="#s-clean"/></svg></button><button aria-label="自定义"><svg class="i"><use href="#s-menu"/></svg></button></div>
  <div class="ime">
    <svg class="sogou" viewBox="0 0 20 20"><rect x="1.500" y="1.500" width="17" height="17" rx="2" fill="#ef5325" transform="rotate(-8 10 10)"/><path d="M15 5Q6 3 5.500 7T14 11.500Q14 16 4.500 14.500" fill="none" stroke="#fff" stroke-width="2.600"/></svg>
    <b>中</b>
    <svg class="i" viewBox="0 0 14 14"><path d="M9 2q3 8-7 8 5 5 9 0 2-4-2-8z" fill="#1d6cc4"/></svg>
    <svg class="i" viewBox="0 0 14 14"><circle cx="4" cy="4.500" r="1.700" fill="none" stroke="#1d6cc4" stroke-width="1.200"/><path d="M9 7h3q0 4-3 5 1-2 0-2z" fill="#1d6cc4"/></svg>
    <svg class="i" viewBox="0 0 14 14"><rect x="1" y="3" width="12" height="9" fill="none" stroke="#1d6cc4" stroke-width="1.300"/><path d="M3 5.500h8M3 7.500h8" stroke="#1d6cc4" stroke-dasharray="1.500 1"/><path d="M4 10h6" stroke="#1d6cc4"/></svg>
    <svg class="i" viewBox="0 0 14 14"><circle cx="5" cy="4" r="2.300" fill="#b9bcc0"/><path d="M1 12q0-5 4-5t4 5z" fill="#b9bcc0"/><path d="M8 8h5v4H8z" fill="#fff" stroke="#b9bcc0"/></svg>
    <svg class="i" viewBox="0 0 14 14"><path d="M4 2l3 1 3-1 4 3-2 3-1-1v6H3V7L2 8 0 5z" fill="#1d6cc4"/></svg>
    <svg class="i" viewBox="0 0 14 14"><path d="M2 13l6-6" stroke="#1d6cc4" stroke-width="2.600"/><path d="M10 1a3.600 3.600 0 0 0-3 6 3.600 3.600 0 0 0 6-3l-2.500 1.500-2-2z" fill="#1d6cc4"/></svg>
  </div>
</footer>
</body>
</html>
```

FILE: styles.css
```css
* { box-sizing: border-box; }
body {
  margin: 0; height: 100vh; min-height: 480px; overflow: hidden;
  display: flex; flex-direction: column;
  background: #373737; color: #dcdcdc;
  font: 9px/12px "Noto Sans", "Noto Sans CJK SC", sans-serif;
}
button, input, select { font: inherit; color: inherit; background: none; border: 0; padding: 0; margin: 0; outline: 0; appearance: none; border-radius: 0; }
button { display: flex; align-items: center; justify-content: center; white-space: nowrap; }
h1, h2, p, ol { margin: 0; padding: 0; font-size: inherit; font-weight: normal; list-style: none; }
.sprite { position: absolute; width: 0; height: 0; }
.i { width: 14px; height: 14px; flex: none; }
.s { width: 10px; height: 10px; flex: none; }
.dd::after, .more::after, .arr::after { content: ""; border: 2px solid transparent; border-top: 3px solid #e8e8e8; border-bottom: 0; }

/* title bar */
.titlebar { position: relative; z-index: 2; flex: none; display: flex; height: 17px; padding-left: 35px; background: linear-gradient(90deg, #26343f, #1d2c37 36%, #4c5c68 46%, #3c4c58 52%, #1d2c37 60%, #22323d 90%, #a9c3dc); }
.titlebar::before { content: ""; position: absolute; left: 0; top: 0; width: 35px; height: 100%; background: linear-gradient(#737373, #444); }
.qat, .info { display: flex; align-items: center; background: linear-gradient(#737373, #444); }
.qat { gap: 4px; width: 315px; flex: none; }
.qat button, .info button { height: 17px; }
.qat .i { width: 14px; height: 13px; }
.qat .dd { width: 8px; }
.qat .tight, .qat .dd { margin-left: -1px; }
.dim::after { opacity: .4; }
.workspace { display: flex; align-items: center; width: 136px; height: 15px; background: linear-gradient(#5f5f5f, #474747); border-left: 1px solid #333; }
.workspace .i { width: 12px; height: 12px; }
.workspace select, .combo select { flex: 1; min-width: 0; height: 15px; padding-left: 2px; }
.workspace, .combo, .units { position: relative; }
.workspace::after, .combo::after, .units::after { content: ""; position: absolute; right: 2px; top: 6px; border: 3px solid transparent; border-top: 4px solid #eee; border-bottom: 0; pointer-events: none; }
.titlebar h1 { flex: 1; display: flex; justify-content: center; gap: 8px; padding-top: 1px; font-size: 10px; line-height: 15px; color: #101418; white-space: nowrap; text-shadow: 0 0 3px #9aa7b1, 0 0 5px #8c9aa5, 0 0 6px #8c9aa5; }
.info { gap: 3px; padding-right: 3px; width: 340px; flex: none; }
.fold { width: 8px; }
.fold::after { content: ""; border: 3px solid transparent; border-left-color: #eee; border-right: 0; }
.info input { width: 136px; height: 15px; padding-left: 2px; background: #626262; }
.info input::placeholder { color: #a5a5a5; font-style: italic; opacity: 1; }
.info .dd { width: 8px; }
.info .login { width: 78px; gap: 2px; justify-content: flex-start; }
.info .sep { border-right: 1px solid #777; width: 12px; padding-right: 4px; }
.info .help { margin-left: 5px; }
.help b { width: 12px; height: 12px; border-radius: 50%; background: #3566a8; border: 1px solid #fff; font-size: 9px; line-height: 10px; color: #fff; }
.winbtns { display: flex; flex: none; width: 93px; padding-left: 12px; height: 13px; }
.winbtns button { width: 22px; background: linear-gradient(#8d97a0, #47525c); border: 1px solid #2a3138; border-top: 0; border-radius: 0 0 0 3px; }
.winbtns button + button { border-radius: 0; }
.winbtns .close { flex: 1; background: linear-gradient(#d58b7d, #b52c1c 60%, #c74c35); color: #fff; }
.appbtn { position: absolute; left: 0; top: 0; width: 31px; height: 29px; background: linear-gradient(#a0a0a0, #6d6d6d); border: 1px solid #333; border-left: 0; }
.appbtn svg { width: 30px; height: 28px; }

/* ribbon tabs */
.tabs { flex: none; display: flex; height: 15px; padding-left: 35px; background: #505050; border-top: 1px solid #3b3b3b; }
.tabs button { padding: 0 8px; color: #c4c4c4; }
.tabs .on { background: #636363; color: #fff; }
.tabs .mini { gap: 4px; padding-left: 16px; }
.mini i { width: 10px; height: 5px; border: 2px solid #eee; border-radius: 1px; background: #444; }
.mini::after { content: ""; border: 2px solid transparent; border-top-color: #ddd; border-bottom: 0; }

/* ribbon panels */
.ribbon { flex: none; display: flex; height: 71px; background: linear-gradient(#4b4b4b, #3e3e3e); border-bottom: 1px solid #686868; }
.panel { display: flex; flex-direction: column; background: #585858; border-right: 1px solid #434343; flex: none; }
.body { flex: 1; display: flex; align-items: flex-start; padding: 3px 0 0 2px; }
.panel h2 { display: flex; align-items: center; justify-content: center; gap: 5px; height: 14px; background: #484848; color: #e2e2e2; position: relative; }
.panel h2::after { border-left-width: 3px; border-right-width: 3px; }
.launch { position: absolute; right: 0; top: 2px; }
.big { flex-direction: column; justify-content: flex-start; width: 30px; flex: none; }
.big.wide { width: 32px; }
.big svg { width: 26px; height: 26px; flex: none; margin-bottom: 1px; }
.big.more::after { margin-top: 1px; }
.col { display: flex; flex-direction: column; }
.grow { flex: 1; }
.sm { height: 17px; gap: 3px; justify-content: flex-start; }
.sm.more::after { margin-left: 4px; }
.sm.on { background: #4468a4; outline: 1px solid #89a8d8; outline-offset: -1px; }
.row { display: flex; align-items: center; height: 17px; }
.p-draw { width: 162px; }
.p-draw .col { padding-left: 5px; }
.p-modify { width: 173px; }
.p-modify .col { width: 45px; padding-left: 2px; }
.p-modify .col:nth-child(3) { width: 57px; }
.p-modify .col:last-child { width: 20px; }
.p-modify .more::after { margin-left: 6px; }
.p-annot { width: 118px; }
.p-annot .col { padding-left: 2px; }
.p-layer { width: 192px; }
.p-layer .combo { margin: 1px 1px 0 0; }
.p-layer .row { gap: 4px; padding-left: 3px; }
.p-block { width: 102px; }
.p-block .col { padding-left: 3px; }
.p-prop { width: 186px; }
.p-prop .row { gap: 2px; }
.p-prop .combo { flex: 1; font-size: 9px; }
.p-group { width: 51px; }
.p-group .sm.on { width: 18px; }
.p-util { width: 59px; }
.p-util .big { width: 37px; }
.p-clip { width: 58px; }
.p-clip .big { width: 36px; }
.p-view { width: 46px; }
.p-view .big { width: 42px; }
.p-util h2, .p-view h2 { gap: 3px; }
.p-view h2 svg { order: 2; }
.combo { display: flex; align-items: center; gap: 1px; height: 16px; margin-right: 1px; padding-left: 2px; background: linear-gradient(#474747, #555); border: 1px solid #333; font-size: 10px; }
.combo .i { width: 13px; height: 13px; }
.swatch { width: 10px; height: 10px; margin-left: 2px; background: #fff; border: 1px solid #222; }
.rule { width: 46px; height: 1px; margin-left: 3px; background: #ddd; }

/* file tabs */
.docs { flex: none; display: flex; align-items: flex-end; height: 20px; padding-left: 13px; background: #373737; border-bottom: 2px solid #5c5f63; }
.doc { height: 16px; width: 98px; justify-content: flex-start; padding-left: 11px; background: #505050; color: #a9a9a9; border-radius: 8px 8px 0 0; clip-path: polygon(6px 0, 100% 0, 100% 100%, 0 100%); }
.doc.on { width: 96px; padding: 0 10px 0 7px; justify-content: space-between; background: #686868; color: #f4f4f4; clip-path: polygon(5px 0, calc(100% - 7px) 0, 100% 100%, 0 100%); }
.doc.on svg { color: #444; }
.add { width: 18px; height: 11px; margin: 0 0 3px 2px; background: #505050; border-radius: 5px; }

/* drawing area */
.canvas { position: relative; flex: 1; min-height: 0; overflow: hidden; background: #1e2830; }
.drawing { position: absolute; inset: 0; width: 100%; height: 100%; }
.cadtext { fill: #f5f8f9; font: 27px "Liberation Sans", sans-serif; }
.cadtext .han { font: 300 28px "Noto Sans CJK SC", sans-serif; }
.vlabel { position: absolute; left: 2px; top: 5px; color: #030506; }
.vpbtns { position: absolute; right: 14px; top: 6px; display: flex; gap: 5px; color: #fff; }
.cube { position: absolute; right: 20px; top: 29px; width: 101px; height: 97px; font-size: 14px; line-height: 16px; }
.cube svg { position: absolute; left: 4px; top: 4px; width: 94px; height: 88px; }
.cube b { position: absolute; font-weight: normal; color: #a7adb1; }
.cube .n { left: 44px; top: 0; }
.cube .s2 { left: 44px; bottom: 0; }
.cube .w { left: 1px; top: 40px; }
.cube .e { right: -1px; top: 40px; }
.cube .top { position: absolute; left: 32px; top: 29px; width: 39px; height: 37px; background: #a4a8aa; border: 1px solid #b3b7b9; box-shadow: inset 0 0 0 7px #a7abac, inset 0 0 0 20px #989fa3; color: #3e464c; font-size: 20px; }
.wcs { position: absolute; right: 51px; top: 139px; width: 37px; height: 12px; justify-content: flex-start; padding-left: 3px; background: #8d939c; border: 1px solid #b0b5bc; border-radius: 4px; font-size: 8px; color: #4d5560; }
.navbar { position: absolute; right: 9px; top: 169px; width: 25px; height: 152px; background: #5c6265; border: 1px solid #7d8285; border-radius: 3px; }
.navbar svg { display: block; width: 100%; height: 100%; }
.edge { position: absolute; right: 1px; top: 0; bottom: 0; width: 5px; background: linear-gradient(#8cc4ea, #d5eaf8 64px, #9fbdd4 65px, #b1cade); }
.drawer { position: absolute; left: -4px; top: 461px; width: 8px; height: 67px; border: 1px solid #e6eef2; border-radius: 4px; background: linear-gradient(#cdd5d9, #9fb0ba 58%, #4d6475 59%, #6b8191); box-shadow: 0 0 8px #000; }
.brand { position: absolute; right: 13px; bottom: 0; display: flex; gap: 4px; color: #9a9fa3; }
.brand svg { width: 59px; height: 62px; }
.brandtext { display: flex; flex-direction: column; align-items: center; padding-top: 13px; }
.brand strong { display: flex; gap: 7px; font-size: 30px; line-height: 32px; }
.brand em { font: 17px/12px "Noto Sans", sans-serif; }
.cmd { position: absolute; left: 266px; right: 265px; bottom: 0; }
.cmd ol { padding-left: 43px; font: 9px/11px "DejaVu Sans Mono", "Noto Sans CJK SC", monospace; color: #e8e8e8; }
.cmd li { width: fit-content; height: 11px; margin-bottom: 1px; padding: 0 2px; background: #4f5457; white-space: pre; }
.cmd li:last-child { margin-bottom: 0; background: #5b5f61; color: #fff; }
.cmdline { display: flex; align-items: center; height: 18px; border-radius: 3px 0 0 0; background: linear-gradient(#5d5d5d, #383838); color: #e5e5e5; }
.grip { width: 4px; height: 12px; margin: 0 1px 0 3px; background: repeating-linear-gradient(#888 0 1px, transparent 1px 2px); }
.cmdline button { width: 16px; }
.cmdline .i { width: 12px; height: 12px; }
.field { flex: 1; display: flex; align-items: center; height: 18px; padding-left: 4px; background: #b9bbbc; }
.prompt { width: 20px; height: 12px; }
.field input { flex: 1; padding-left: 6px; }
.field input::placeholder { color: #747678; opacity: 1; font-style: italic; }
.up { border: 3px solid transparent; border-bottom-color: #222; border-top: 0; margin-right: 2px; }

/* status bar */
.status { position: relative; flex: none; display: flex; height: 20px; padding-right: 1px; background: #545454; border-top: 1px solid #6b6b6b; }
.layouts { flex: 1; display: flex; align-items: flex-start; padding-left: 9px; background: #373737; }
.layouts button { width: 42px; height: 13px; margin-right: -1px; background: #505050; color: #b0b0b0; clip-path: polygon(0 0, 100% 0, calc(100% - 5px) 100%, 5px 100%); }
.layouts .on { width: 36px; background: #898989; color: #fff; font-weight: bold; }
.layouts .addl { width: 22px; margin-left: 3px; color: #fff; }
.coords { width: 162px; padding: 3px 4px 0 0; border-left: 1px solid #777; text-align: right; color: #c4c4c4; white-space: nowrap; }
.g { display: flex; align-items: center; flex: none; border-left: 1px solid #777; color: #cfcfcf; }
.g button { width: 18px; height: 19px; }
.g .dd { width: 12px; }
.g .dd::after { border-width: 3px; border-bottom-width: 0; border-top-width: 4px; }
.g.roomy { padding: 0 2px; }
.g.flat { border-color: #666; }
.g .model { width: 23px; font-weight: bold; color: #f2f2f2; }
.g .blue { color: #2f8cf0; }
.g .ratio { width: 50px; color: #e5e5e5; }
.units { display: flex; width: 56px; color: #f2f2f2; font-weight: bold; }
.units select { flex: 1; height: 17px; padding-left: 6px; }
.units::after { right: 4px; }
.ime { position: absolute; right: 240px; top: -8px; display: flex; align-items: center; gap: 3px; height: 17px; width: 137px; padding-left: 22px; background: #fff; color: #1d6cc4; }
.ime b { font-size: 12px; line-height: 16px; }
.ime .i { width: 13px; height: 13px; }
.sogou { position: absolute; left: -3px; top: -3px; width: 21px; height: 21px; }
```
